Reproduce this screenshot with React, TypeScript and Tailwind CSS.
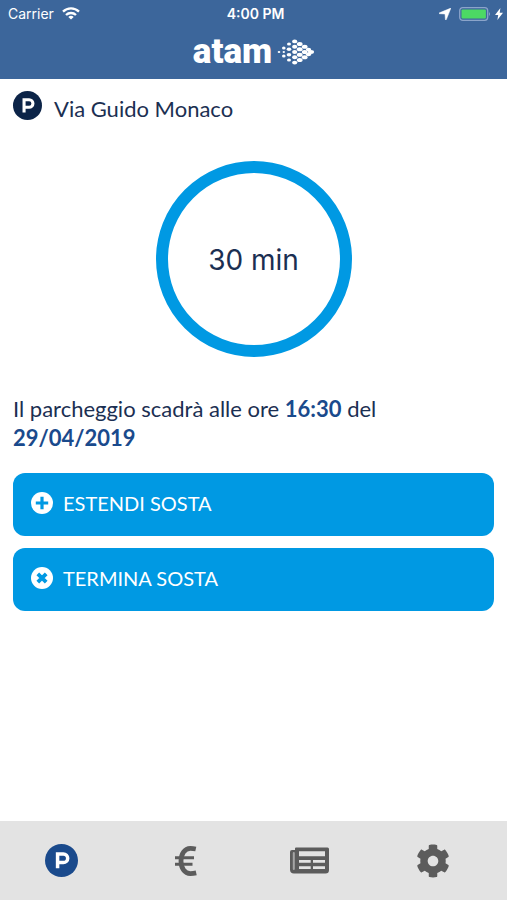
import React from 'react';
import { FaCog } from 'react-icons/fa';

function ParkingIcon({ className }: { className: string }) {
  return (
    <svg viewBox="0 0 32 32" className={className} aria-hidden="true">
      <circle cx="16" cy="16" r="16" fill="currentColor" />
      <path
        d="M12.2 23.6V9.6h5.6a4.2 4.2 0 0 1 0 8.4h-5.6"
        fill="none"
        stroke="white"
        strokeWidth="3.4"
      />
    </svg>
  );
}

function PlusCircleIcon() {
  return (
    <svg viewBox="0 0 22 22" className="size-[22px] shrink-0" aria-hidden="true">
      <circle cx="11" cy="11" r="11" fill="white" />
      <path d="M11 4.8v12.4M4.800 11h12.4" stroke="#0099e3" strokeWidth="3.2" />
    </svg>
  );
}

function CloseCircleIcon() {
  return (
    <svg viewBox="0 0 22 22" className="size-[22px] shrink-0" aria-hidden="true">
      <circle cx="11" cy="11" r="11" fill="white" />
      <path d="M6.8 6.8l8.4 8.4M15.2 6.8l-8.4 8.4" stroke="#0099e3" strokeWidth="3.8" />
    </svg>
  );
}

function EuroIcon() {
  return (
    <svg viewBox="0 0 22 30" className="h-[30px] w-[22px]" fill="none" stroke="currentColor" aria-hidden="true">
      <path d="M20.8 3Q18 2.400 15.400 2.400C9.500 2.400 6 8 6 15s3.500 12.600 9.400 12.600q2.800 0 5.800-.7" strokeWidth="4.800" />
      <path d="M0 11.700h19M0 18.300h17.500" strokeWidth="3" />
    </svg>
  );
}

function NewsIcon() {
  return (
    <svg viewBox="0 0 39 27" className="h-[27px] w-[39px]" aria-hidden="true">
      <path
        fill="currentColor"
        fillRule="evenodd"
        d="M6 .5h31.500q1.500 0 1.500 1.500v21q0 3.500-3.500 3.500H4Q0 26.500 0 22.500V5q0-2 2-2h3V1.500q0-1 1-1zM9 4.200v5h26v-5zM9 13v2.700h11.700V13zM23 13v2.700h12V13zM9 19.300v2.600h11.700v-2.600zM23 19.300v2.600h12v-2.600z"
      />
      <path d="M3.800 6v16" stroke="#a5a5a5" strokeWidth="2" strokeLinecap="round" />
    </svg>
  );
}

// cx, cy, rx, ry
const dots = [
  [3, 14, 1.3, 1.1],
  [7.8, 10, 1.8, 1.5], [7.8, 14, 1.2, 1], [7.8, 18, 1.8, 1.5],
  [13, 6, 2, 1.6], [13, 11.3, 2.3, 1.8], [13, 16.7, 2.3, 1.8], [13, 22, 2, 1.6],
  [18.7, 3.4, 2.6, 1.9], [18.7, 8.7, 2.6, 2], [18.7, 14, 2.6, 2], [18.7, 19.3, 2.6, 2], [18.7, 24.6, 2.6, 1.9],
  [23.7, 6, 2.9, 2], [23.7, 11.3, 2.9, 2], [23.7, 16.7, 2.9, 2], [23.7, 22, 2.9, 2],
  [28.7, 8.7, 2.9, 2], [28.7, 14, 2.9, 2], [28.7, 19.3, 2.9, 2],
  [32.5, 11.6, 2.7, 1.8], [32.5, 16.4, 2.7, 1.8],
  [35, 14, 3, 1.9],
];

function LogoMark() {
  return (
    <svg viewBox="0 0 38 28" className="h-7 w-[38px]" fill="white" aria-hidden="true">
      {dots.map(([cx, cy, rx, ry]) => (
        <ellipse key={`${cx}-${cy}`} cx={cx} cy={cy} rx={rx} ry={ry} />
      ))}
    </svg>
  );
}

function StatusBar() {
  return (
    <div className="grid grid-cols-3 items-center h-[27px] pl-2 pr-1 font-['Inter',sans-serif] text-[14px] leading-5">
      <div className="flex items-center gap-2">
        <span>Carrier</span>
        <svg viewBox="0 0 18 13" className="h-[13px] w-[18px]" fill="none" stroke="white" strokeWidth="2.3" aria-hidden="true">
          <path d="M1 4.700a11.500 11.500 0 0 1 16 0M4 8a7.200 7.200 0 0 1 10 0" />
          <path d="M9 12.600L6.300 9.900a4 4 0 0 1 5.400 0z" fill="white" stroke="none" />
        </svg>
      </div>
      <span className="text-center font-semibold">4:00 PM</span>
      <div className="flex items-center justify-end gap-1">
        <svg viewBox="0 0 12 12" className="mr-1 size-3" fill="white" aria-hidden="true">
          <path d="M11.900.1L7.300 11.600q-.6.900-.9-.2L6 6 .6 5.700q-1.200-.4-.1-.9z" stroke="white" strokeWidth=".5" />
        </svg>
        <svg viewBox="0 0 32 14" className="h-3.5 w-8" aria-hidden="true">
          <rect x=".7" y=".7" width="28" height="12.6" rx="3" fill="none" stroke="#8ba4ca" strokeWidth="1.3" />
          <rect x="2.5" y="2.5" width="24.4" height="9" rx="1" fill="#4cd964" />
          <path d="M30 5q2 2 0 4z" fill="#8ba4ca" />
        </svg>
        <svg viewBox="0 0 8 12" className="h-3 w-2" fill="white" aria-hidden="true">
          <path d="M5.400 0L0 7h3.200L2.400 12 8 4.800H4.700z" />
        </svg>
      </div>
    </div>
  );
}

export default function App() {
  return (
    <div className="min-h-screen flex flex-col bg-white text-[#1b2f52] font-['Lato',sans-serif]">
      <header className="bg-[#3c669b] text-white h-[79px]">
        <StatusBar />
        <div className="flex items-center justify-center gap-1">
          <h1 className="font-['Roboto',sans-serif] font-black text-[35px] leading-[50px]">atam</h1>
          <LogoMark />
        </div>
      </header>

      <main className="flex-1 flex flex-col px-[13px] pt-3">
        <div className="flex items-start gap-3">
          <ParkingIcon className="size-[29px] text-[#0c2448]" />
          <h2 className="pt-[3px] text-[22px] leading-[29px]">Via Guido Monaco</h2>
        </div>

        <div className="mt-[38px] size-[196px] self-center rounded-full border-[12px] border-[#0099e3] flex items-center justify-center">
          <span className="pt-0.5 font-['Inter',sans-serif] text-[28px] leading-9">30 min</span>
        </div>

        <p className="mt-[37px] text-[22px] leading-[29px]">
          Il parcheggio scadrà alle ore <strong className="text-[#1a4a8c]">16:30</strong> del
          <br />
          <strong className="text-[#1a4a8c]">29/04/2019</strong>
        </p>

        <div className="mt-[21px] flex flex-col gap-3 text-white text-[20px]">
          <button type="button" className="flex items-center gap-2.5 h-[63px] rounded-xl bg-[#0099e3] px-[18px] pb-1">
            <PlusCircleIcon />
            ESTENDI SOSTA
          </button>
          <button type="button" className="flex items-center gap-2.5 h-[63px] rounded-xl bg-[#0099e3] px-[18px] pb-1">
            <CloseCircleIcon />
            TERMINA SOSTA
          </button>
        </div>
      </main>

      <nav className="grid grid-cols-4 h-[79px] pr-3 bg-[#e3e3e3] text-[#5c5c5c]">
        <button type="button" aria-label="Sosta" className="flex items-center justify-center">
          <ParkingIcon className="size-[33px] text-[#1a4a8c]" />
        </button>
        <button type="button" aria-label="Pagamenti" className="flex items-center justify-center">
          <EuroIcon />
        </button>
        <button type="button" aria-label="Notizie" className="flex items-center justify-center">
          <NewsIcon />
        </button>
        <button type="button" aria-label="Impostazioni" className="flex items-center justify-center">
          <FaCog className="size-[34px]" />
        </button>
      </nav>
    </div>
  );
}
